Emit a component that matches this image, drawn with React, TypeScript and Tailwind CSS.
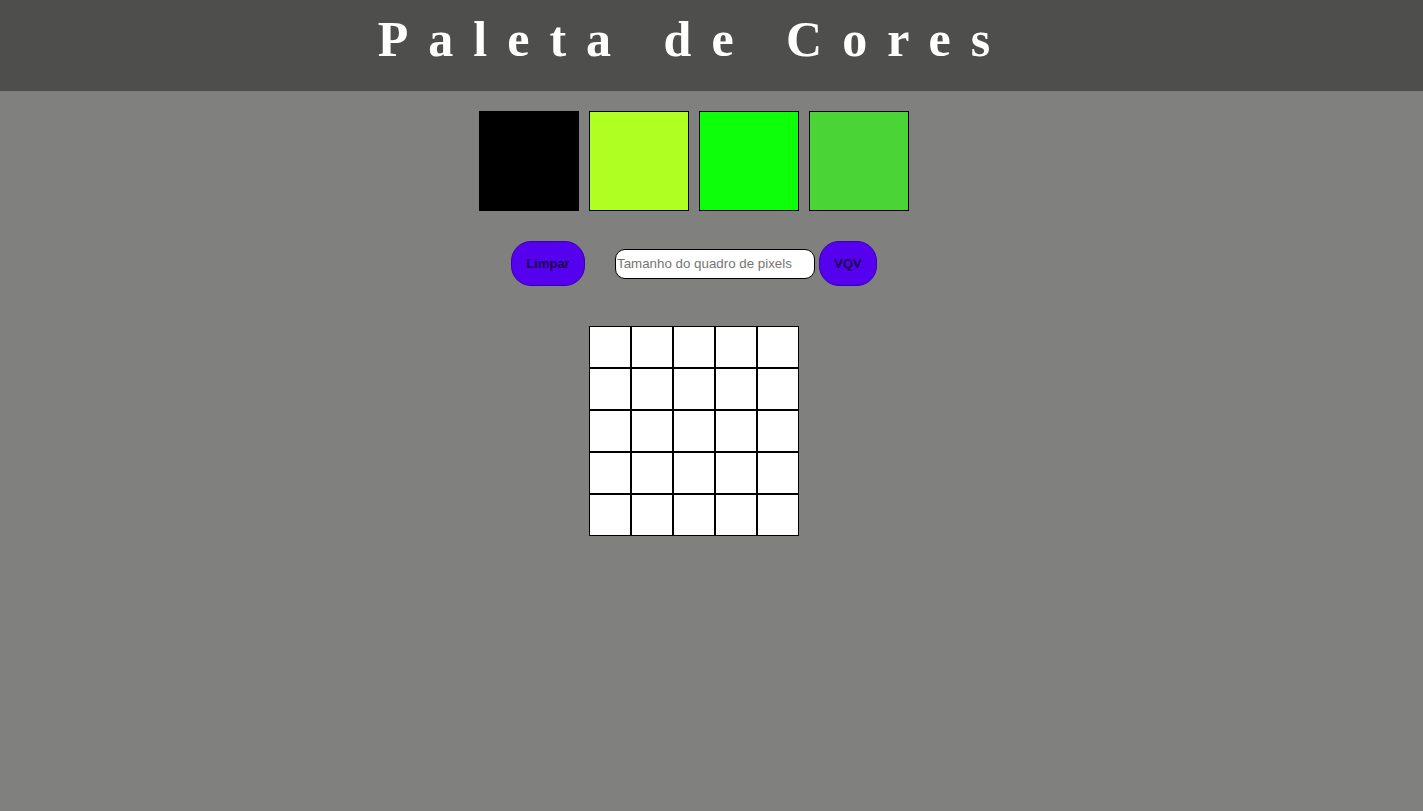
import React from 'react';

const palette = ['bg-[#000000]', 'bg-[#b0ff22]', 'bg-[#0eff0a]', 'bg-[#4ad435]'];

export default function App() {
  const cells = Array.from({ length: 25 });

  return (
    <div className="min-h-screen bg-[#80807e] font-['Liberation_Sans',Arial,sans-serif]">
      <header className="h-[91px] bg-[#4e4e4c]">
        <div className="w-[1388px] text-center">
          <h1 className="pt-[10px] text-[50px] leading-[58px] font-bold tracking-[20px] text-white font-['Liberation_Serif','Times_New_Roman',serif]">
            Paleta de Cores
          </h1>
        </div>
      </header>

      <main className="w-[1388px] flex flex-col items-center">
        <section className="mt-[20px] flex gap-[10px]">
          {palette.map((bg) => (
            <div key={bg} className={`w-[100px] h-[100px] box-border border border-black ${bg}`} />
          ))}
        </section>

        <section className="mt-[30px] flex items-center">
          <button className="w-[74px] h-[45px] rounded-[20px] border border-[#3a00b0] bg-[#5500ee] text-[13px] font-bold text-[#1a0050]">
            Limpar
          </button>
          <input
            type="text"
            placeholder="Tamanho do quadro de pixels"
            className="ml-[30px] w-[200px] h-[30px] rounded-[10px] border border-black bg-white px-[1px] text-[13.33px] text-black placeholder:text-[#757575] outline-none"
          />
          <button className="ml-[4px] w-[58px] h-[45px] rounded-[20px] border border-[#3a00b0] bg-[#5500ee] text-[13px] font-bold text-[#1a0050]">
            VQV
          </button>
        </section>

        <section className="mt-[40px] grid grid-cols-5 w-[210px]">
          {cells.map((_, i) => (
            <div key={i} className="w-[42px] h-[42px] box-border border border-black bg-white" />
          ))}
        </section>
      </main>
    </div>
  );
}
